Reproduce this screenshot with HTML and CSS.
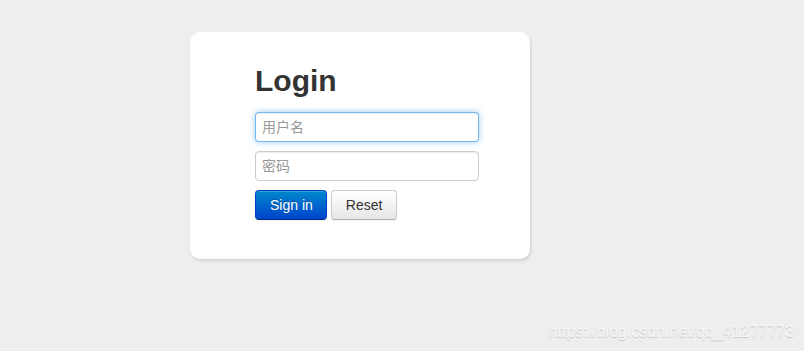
FILE: index.html
```html
<!DOCTYPE html>
<html lang="zh">
<head>
    <meta charset="UTF-8">
    <meta name="viewport" content="width=device-width, initial-scale=1.0">
    <title>Login</title>
    <link rel="stylesheet" href="styles.css">
</head>
<body>
    <form class="form-signin">
        <h2 class="form-signin-heading">Login</h2>
        <input type="text" class="input-block focused" placeholder="用户名">
        <input type="password" class="input-block" placeholder="密码">
        <div class="form-actions">
            <button type="button" class="btn btn-primary">Sign in</button>
            <button type="reset" class="btn">Reset</button>
        </div>
    </form>

    <div class="watermark">https://blog.csdn.net/qq_41277773</div>
</body>
</html>
```

FILE: styles.css
```css
body {
    margin: 0;
    padding-top: 32px;
    background-color: #eeeeee;
    font-family: "Liberation Sans", Arial, "Noto Sans CJK SC", sans-serif;
    font-size: 14px;
    line-height: 20px;
    color: #333333;
    height: 351px;
    box-sizing: border-box;
    position: relative;
    overflow: hidden;
}
.form-signin {
    width: 340px;
    box-sizing: border-box;
    margin-left: 190px;
    padding: 29px 52px 39px 65px;
    background-color: #ffffff;
    border-radius: 10px;
    box-shadow: 1px 2px 3px rgba(0, 0, 0, 0.12);
    display: flex;
    flex-direction: column;
    align-items: flex-start;
}
.form-signin-heading {
    margin: 0 0 11px;
    font-size: 30px;
    line-height: 40px;
    font-weight: bold;
    color: #333333;
}
.input-block {
    width: 224px;
    height: 30px;
    box-sizing: border-box;
    margin: 0 0 9px;
    padding: 4px 6px;
    font-family: "Liberation Sans", Arial, "Noto Sans CJK SC", sans-serif;
    font-size: 14px;
    color: #555555;
    background-color: #ffffff;
    border: 1px solid #cccccc;
    border-radius: 4px;
    box-shadow: inset 0 1px 1px rgba(0, 0, 0, 0.075);
    outline: none;
}
.input-block::placeholder {
    color: #999999;
}
.input-block.focused {
    border-color: rgba(82, 168, 236, 0.8);
    box-shadow: inset 0 1px 1px rgba(0, 0, 0, 0.075), 0 0 6px rgba(82, 168, 236, 0.6);
}
.form-actions {
    display: flex;
    gap: 4px;
}
.btn {
    height: 30px;
    padding: 4px 14px;
    font-family: "Liberation Sans", Arial, sans-serif;
    font-size: 14px;
    line-height: 20px;
    color: #333333;
    background-image: linear-gradient(to bottom, #ffffff, #e6e6e6);
    border: 1px solid #cccccc;
    border-bottom-color: #b3b3b3;
    border-radius: 4px;
    box-shadow: inset 0 1px 0 rgba(255, 255, 255, 0.2), 0 1px 2px rgba(0, 0, 0, 0.05);
    cursor: pointer;
}
.btn-primary {
    padding: 4px 13px 4px 14px;
    color: #ffffff;
    text-shadow: 0 -1px 0 rgba(0, 0, 0, 0.25);
    background-image: linear-gradient(to bottom, #0088cc, #0044cc);
    border-color: #0044cc #0044cc #002a80;
}
.watermark {
    position: absolute;
    right: 10px;
    bottom: 9px;
    font-size: 16px;
    line-height: 20px;
    color: #f7f7f7;
    text-shadow: 0 1px 1px rgba(0, 0, 0, 0.18);
}
```
